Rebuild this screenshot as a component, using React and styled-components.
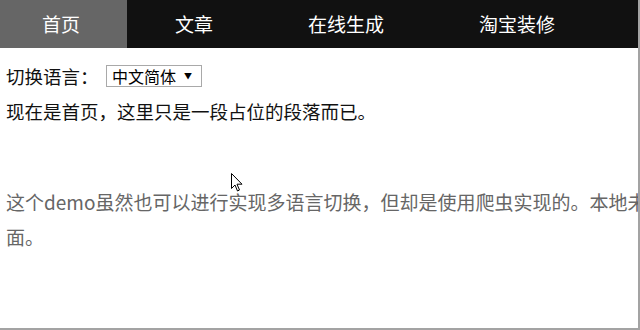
import React from "react";
import styled, { createGlobalStyle } from "styled-components";

const GlobalStyle = createGlobalStyle`
  html, body {
    margin: 0;
    padding: 0;
    background: #fff;
  }
  body {
    font-family: "Noto Sans CJK SC", "Noto Sans", sans-serif;
  }
`;

const Frame = styled.div`
  position: relative;
  width: 638px;
  height: 328px;
  border-right: 2px solid #a3a3a3;
  border-bottom: 2px solid #a3a3a3;
  overflow: hidden;
  background: #fff;
`;

const NavBar = styled.ul`
  display: flex;
  list-style: none;
  margin: 0 0 0 -6px;
  padding: 0;
  height: 48px;
  background: #111;
`;

const NavItem = styled.li`
  padding: 0 47px 0 48px;
  line-height: 48px;
  font-size: 19px;
  color: #fff;
  white-space: nowrap;
  background: ${(p) => (p.$active ? "#666" : "transparent")};
  cursor: pointer;
`;

const Content = styled.div`
  padding: 13px 0 0 6px;
  color: #111;
  font-size: 18.5px;
`;

const LangRow = styled.div`
  display: flex;
  align-items: center;
  height: 30px;
`;

const Label = styled.span`
  width: 100px;
`;

const Select = styled.div`
  display: flex;
  align-items: center;
  justify-content: space-between;
  box-sizing: border-box;
  width: 96px;
  height: 22px;
  padding: 0 9px 0 5px;
  border: 1px solid #a9a9a9;
  font-size: 16px;
  color: #000;
  background: #fff;
`;

const Caret = styled.span`
  font-size: 8px;
  line-height: 1;
`;

const Lead = styled.p`
  margin: 0;
  line-height: 40px;
  white-space: nowrap;
`;

const Note = styled.p`
  margin: 53px 0 0;
  font-size: 19px;
  line-height: 35px;
  color: #666;
  white-space: nowrap;
`;

const Cursor = styled.svg`
  position: absolute;
  left: 231px;
  top: 173px;
`;

const navItems = ["首页", "文章", "在线生成", "淘宝装修"];

export default function App() {
  return (
    <>
      <GlobalStyle />
      <Frame>
        <NavBar>
          {navItems.map((item, i) => (
            <NavItem key={item} $active={i === 0}>
              {item}
            </NavItem>
          ))}
        </NavBar>
        <Content>
          <LangRow>
            <Label>切换语言：</Label>
            <Select>
              <span>中文简体</span>
              <Caret>▼</Caret>
            </Select>
          </LangRow>
          <Lead>现在是首页，这里只是一段占位的段落而已。</Lead>
          <Note>
            这个demo虽然也可以进行实现多语言切换，但却是使用爬虫实现的。本地未保存其他语言的页
            <br />
            面。
          </Note>
        </Content>
        <Cursor width="12" height="19" viewBox="0 0 12 19">
          <path
            d="M0.5 0.5 L0.5 15.5 L4 12 L6.5 18 L8.5 17 L6 11.2 L11 11.2 Z"
            fill="#fff"
            stroke="#000"
            strokeWidth="1"
            strokeLinejoin="miter"
          />
        </Cursor>
      </Frame>
    </>
  );
}
